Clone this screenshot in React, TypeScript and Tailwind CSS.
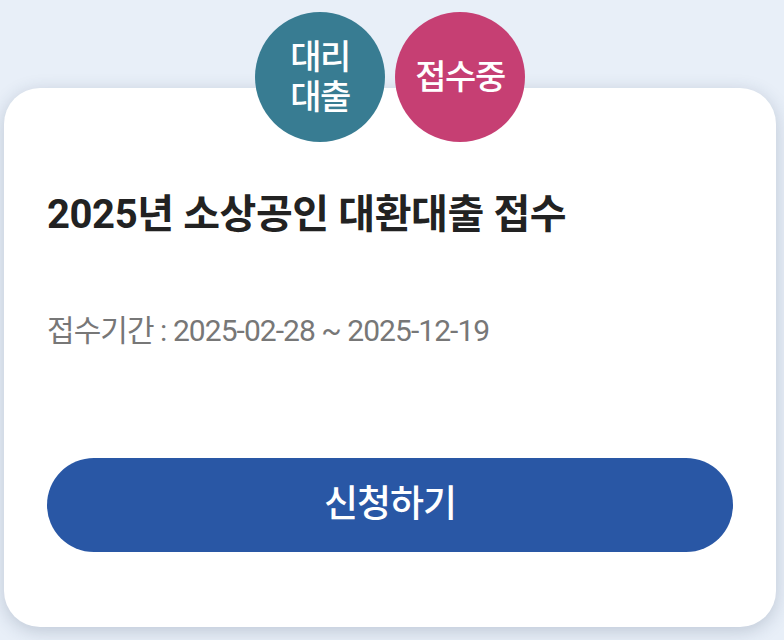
export default function App() {
  const font = { fontFamily: 'Roboto, "Noto Sans CJK KR", sans-serif' };
  return (
    <div className="w-[784px] h-[640px] bg-[#e8eff8] overflow-hidden" style={font}>
      <div className="relative mx-[4px] mt-[88px] w-[772px] rounded-[36px] bg-white shadow-[0_4px_18px_rgba(40,60,90,0.22)] pt-[102px] px-[43px] pb-[75px]">
        <div className="absolute left-0 right-0 top-[-76px] flex justify-center gap-[10px]">
          <div className="w-[130px] h-[130px] rounded-full bg-[#387c92] flex flex-col items-center justify-center text-white text-[34px] font-medium leading-[40px] tracking-[-1.5px]">
            <span>대리</span>
            <span>대출</span>
          </div>
          <div className="w-[130px] h-[130px] rounded-full bg-[#c63f73] flex items-center justify-center text-white text-[34px] font-medium tracking-[-1.5px]">
            접수중
          </div>
        </div>
        <div className="h-[50px] leading-[50px] text-[40px] font-bold text-[#222] tracking-[-0.4px] whitespace-nowrap">
          2025년 소상공인 대환대출 접수
        </div>
        <div className="mt-[71px] h-[40px] leading-[40px] text-[30px] text-[#777] tracking-[-0.95px] whitespace-nowrap">
          접수기간 : 2025-02-28 ~ 2025-12-19
        </div>
        <div className="mt-[107px] h-[94px] rounded-full bg-[#2957a5] flex items-center justify-center text-white text-[37px] font-medium tracking-[-1px]">
          신청하기
        </div>
      </div>
    </div>
  );
}
